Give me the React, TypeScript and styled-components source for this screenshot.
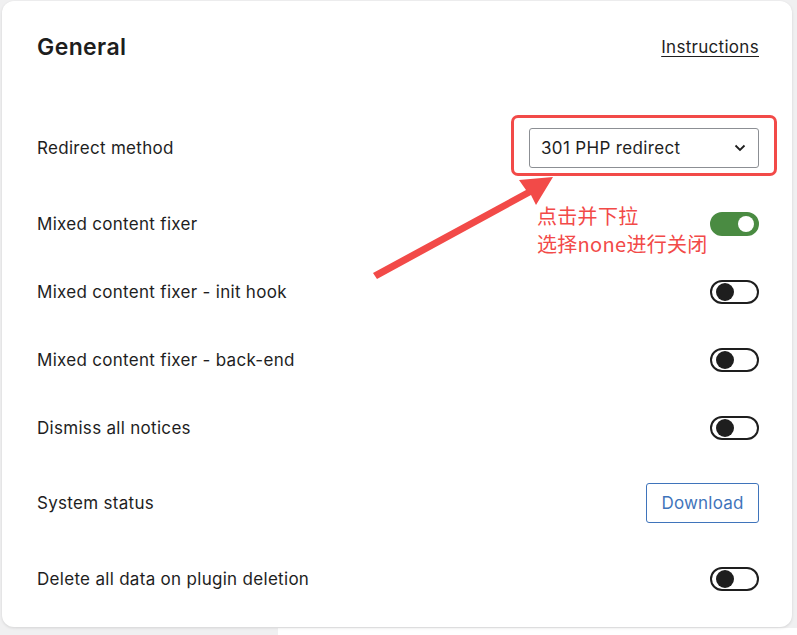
import React from "react";
import styled, { createGlobalStyle } from "styled-components";

const Global = createGlobalStyle`
  html, body { margin: 0; padding: 0; }
  body {
    background: #f0f0f1;
    font-family: Inter, "Noto Sans", "Liberation Sans", sans-serif;
    color: #1e1e1e;
    -webkit-font-smoothing: antialiased;
  }
`;

const Page = styled.div`
  width: 797px;
  height: 635px;
  padding: 1px 5px 0 2px;
  box-sizing: border-box;
  background: linear-gradient(to right, #f0f0f1 278px, #ffffff 278px);
  background-size: 100% 7px;
  background-position: bottom;
  background-repeat: no-repeat;
  background-color: #f0f0f1;
`;

const Card = styled.section`
  position: relative;
  width: 790px;
  height: 626px;
  box-sizing: border-box;
  background: #fff;
  border-radius: 12px;
  box-shadow: 0 1px 3px rgba(0, 0, 0, 0.12);
  padding: 31px 33px 0 35px;
`;

const Header = styled.div`
  display: flex;
  align-items: center;
  justify-content: space-between;
  height: 30px;
  margin-bottom: 66px;
`;

const Title = styled.h2`
  margin: 0;
  font-size: 23px;
  font-weight: 600;
  letter-spacing: 0.4px;
  color: #1e1e1e;
`;

const Link = styled.a`
  font-size: 17px;
  letter-spacing: 0.3px;
  color: #1e1e1e;
  text-decoration: underline;
  text-underline-offset: 3px;
`;

const Rows = styled.div`
  display: flex;
  flex-direction: column;
  gap: 43px;
`;

const Row = styled.div`
  display: flex;
  align-items: center;
  justify-content: space-between;
  min-height: 25px;
`;

const Label = styled.span`
  font-size: 17px;
  letter-spacing: 0.3px;
  color: #1e1e1e;
`;

const SelectWrap = styled.div`
  position: relative;
`;

const Select = styled.div`
  width: 230px;
  height: 40px;
  box-sizing: border-box;
  border: 1px solid #8c8f94;
  border-radius: 3px;
  display: flex;
  align-items: center;
  justify-content: space-between;
  padding: 0 12px 0 11px;
  font-size: 17px;
  letter-spacing: 0.35px;
  color: #1e1e1e;
  background: #fff;
`;

const Highlight = styled.div`
  position: absolute;
  top: -13px;
  left: -18px;
  right: -18px;
  bottom: -8px;
  border: 3.5px solid #f24a48;
  border-radius: 7px;
  pointer-events: none;
`;

const Toggle = styled.div<{ $on?: boolean }>`
  width: 49px;
  height: 24px;
  box-sizing: border-box;
  border-radius: 12px;
  border: 2px solid ${(p) => (p.$on ? "#4a8b42" : "#1e1e1e")};
  background: ${(p) => (p.$on ? "#4a8b42" : "#fff")};
  position: relative;
  &::after {
    content: "";
    position: absolute;
    top: 50%;
    transform: translateY(-50%);
    left: ${(p) => (p.$on ? "26px" : "4px")};
    width: ${(p) => (p.$on ? "16px" : "18px")};
    height: ${(p) => (p.$on ? "16px" : "18px")};
    border-radius: 50%;
    background: ${(p) => (p.$on ? "#fff" : "#1e1e1e")};
  }
`;

const Button = styled.button`
  width: 113px;
  height: 40px;
  box-sizing: border-box;
  border: 1px solid #3f74bb;
  border-radius: 3px;
  background: #fff;
  color: #3f74bb;
  font-family: inherit;
  font-size: 17px;
  letter-spacing: 0.2px;
`;

const Overlay = styled.svg`
  position: absolute;
  left: -2px;
  top: -1px;
  pointer-events: none;
`;

const Note = styled.div`
  position: absolute;
  left: 535px;
  top: 201px;
  font-family: "Noto Sans CJK SC", "Noto Sans", sans-serif;
  font-size: 20px;
  letter-spacing: 0.3px;
  line-height: 28px;
  color: #f24a48;
`;

const Chevron = () => (
  <svg width="12" height="8" viewBox="0 0 12 8">
    <polyline points="1.5,1.5 6,6 10.5,1.5" fill="none" stroke="#1e1e1e" strokeWidth="1.8" />
  </svg>
);

const toggles: [string, boolean][] = [
  ["Mixed content fixer", true],
  ["Mixed content fixer - init hook", false],
  ["Mixed content fixer - back-end", false],
  ["Dismiss all notices", false],
];

export default function App() {
  return (
    <>
      <Global />
      <Page>
        <Card>
          <Header>
            <Title>General</Title>
            <Link>Instructions</Link>
          </Header>
          <Rows>
            <Row>
              <Label>Redirect method</Label>
              <SelectWrap>
                <Select>
                  <span>301 PHP redirect</span>
                  <Chevron />
                </Select>
                <Highlight />
              </SelectWrap>
            </Row>
            {toggles.map(([label, on]) => (
              <Row key={label}>
                <Label>{label}</Label>
                <Toggle $on={on} />
              </Row>
            ))}
            <Row>
              <Label>System status</Label>
              <Button>Download</Button>
            </Row>
            <Row>
              <Label>Delete all data on plugin deletion</Label>
              <Toggle />
            </Row>
          </Rows>
          <Overlay width="797" height="635" viewBox="0 0 797 635">
            <polygon
              points="373,273 377,279 531,195 536,205 553,177 519,180 526,190"
              fill="#f24a48"
            />
          </Overlay>
          <Note>
            点击并下拉
            <br />
            选择none进行关闭
          </Note>
        </Card>
      </Page>
    </>
  );
}
